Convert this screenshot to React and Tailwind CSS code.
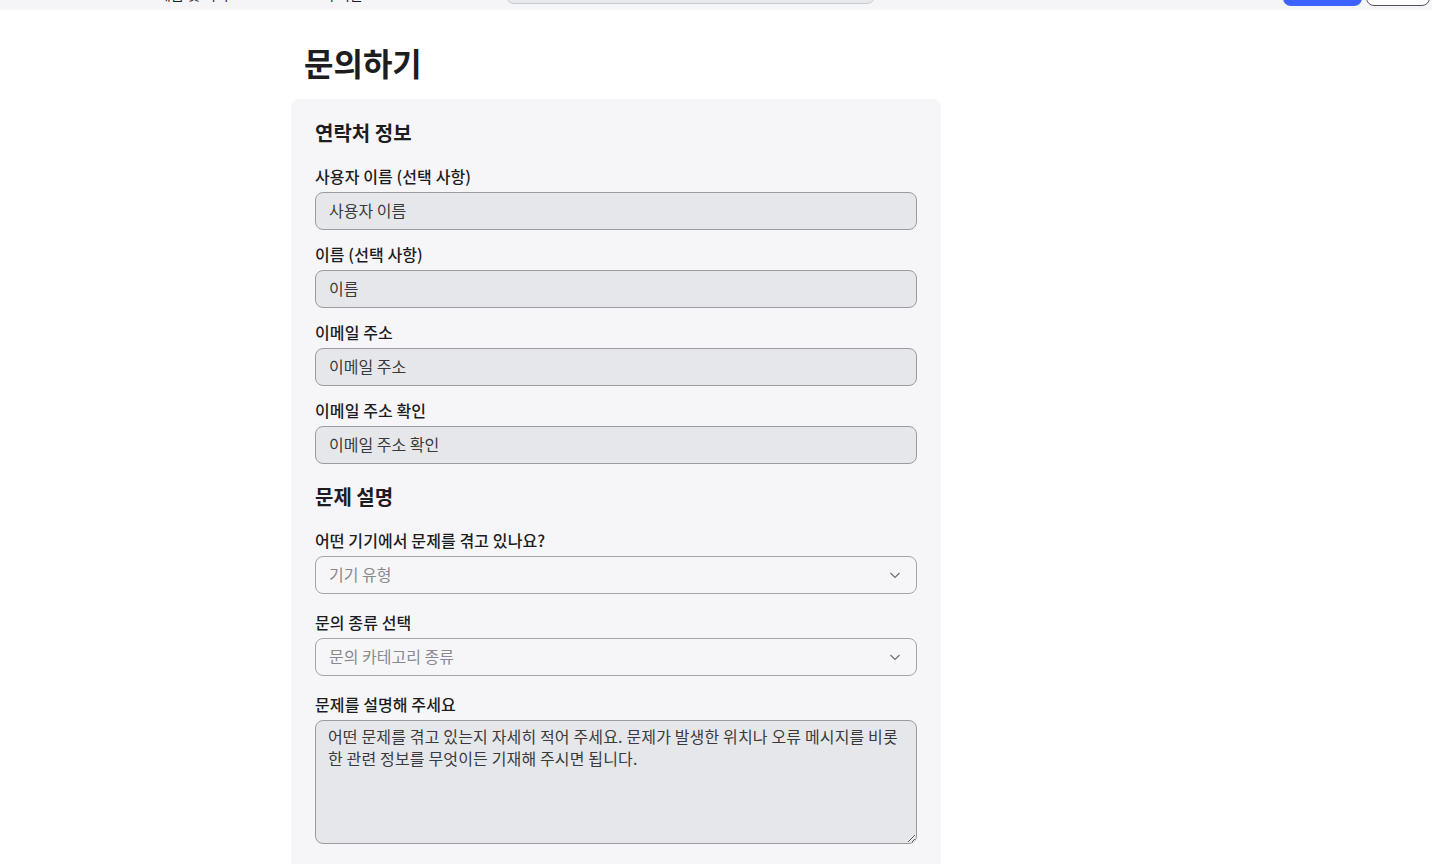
import React from "react";

const font = { fontFamily: '"Noto Sans CJK KR", "Noto Sans", sans-serif' };

function Label({ children }) {
  return <label className="block text-[16px] leading-6 font-medium text-[#1d1d1f] mb-1 tracking-[0.1px]">{children}</label>;
}

function TextInput({ placeholder }) {
  return (
    <input
      placeholder={placeholder}
      className="block w-full h-[38px] rounded-lg border border-[#9b9ba0] bg-[#e6e7eb] px-[13px] pb-[2px] text-[16px] text-[#333] placeholder:text-[#3a3a3c] outline-none"
      style={font}
    />
  );
}

function Select({ placeholder }) {
  return (
    <div className="flex w-full h-[38px] items-center justify-between rounded-lg border border-[#a3a3a8] bg-[#f6f6f8] pl-[13px] pr-[14px] text-[16px] text-[#8a8a8e]">
      <span className="-mt-[2px]">{placeholder}</span>
      <svg width="14" height="14" viewBox="0 0 14 14" fill="none" stroke="#6e6e73" strokeWidth="1.2">
        <path d="M2.5 5l4.5 4.5L11.5 5" />
      </svg>
    </div>
  );
}

export default function App() {
  return (
    <div className="min-h-screen bg-white overflow-hidden" style={font}>
      <header className="h-[10px] overflow-hidden bg-[#f5f5f7]">
        <div className="relative -mt-[46px] h-[56px]">
          <div className="absolute left-0 top-[30px] flex items-center text-[14px] text-[#1d1d1f]">
            <span className="w-[150px]">&nbsp;</span>
            <span className="ml-[8px] w-[150px]">제품 및 서비스</span>
            <span>고객 지원</span>
          </div>
          <div className="absolute left-[506px] top-[14px] w-[369px] h-[36px] rounded-lg border border-[#c9cad0] bg-[#e8e9ed]" />
          <div className="absolute left-[1283px] top-[16px] w-[79px] h-[36px] rounded-lg bg-[#3c63ff]" />
          <div className="absolute left-[1366px] top-[16px] w-[64px] h-[36px] rounded-lg border border-[#55565c] bg-white" />
        </div>
      </header>

      <main className="ml-[291px] w-[650px]">
        <h1 className="pl-[13px] pt-[32px] pb-[17px] text-[32px] leading-[40px] font-bold text-[#1d1d1f]">문의하기</h1>
        <div className="rounded-lg bg-[#f6f6f8] px-6 pt-[20px] pb-10">
          <h2 className="text-[20px] leading-7 font-bold text-[#1d1d1f] mb-[17px]">연락처 정보</h2>
          <div className="flex flex-col gap-3">
            <div>
              <Label>사용자 이름 (선택 사항)</Label>
              <TextInput placeholder="사용자 이름" />
            </div>
            <div>
              <Label>이름 (선택 사항)</Label>
              <TextInput placeholder="이름" />
            </div>
            <div>
              <Label>이메일 주소</Label>
              <TextInput placeholder="이메일 주소" />
            </div>
            <div>
              <Label>이메일 주소 확인</Label>
              <TextInput placeholder="이메일 주소 확인" />
            </div>
          </div>

          <h2 className="mt-[19px] text-[20px] leading-7 font-bold text-[#1d1d1f] mb-[17px]">문제 설명</h2>
          <div className="flex flex-col gap-4">
            <div>
              <Label>어떤 기기에서 문제를 겪고 있나요?</Label>
              <Select placeholder="기기 유형" />
            </div>
            <div>
              <Label>문의 종류 선택</Label>
              <Select placeholder="문의 카테고리 종류" />
            </div>
            <div>
              <Label>문제를 설명해 주세요</Label>
              <textarea
                className="block w-full h-[124px] rounded-lg border border-[#9b9ba0] bg-[#e6e7eb] px-[12px] py-[4px] text-[16px] leading-[22px] tracking-[0.15px] text-[#333] placeholder:text-[#3a3a3c] outline-none"
                style={font}
                placeholder="어떤 문제를 겪고 있는지 자세히 적어 주세요. 문제가 발생한 위치나 오류 메시지를 비롯한 관련 정보를 무엇이든 기재해 주시면 됩니다."
              />
            </div>
          </div>
        </div>
      </main>
    </div>
  );
}
